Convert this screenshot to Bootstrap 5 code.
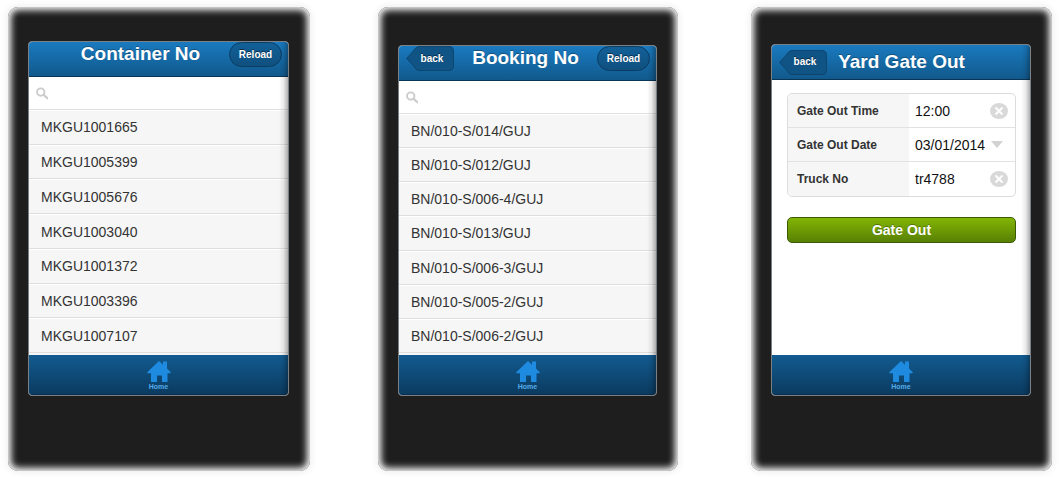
<!DOCTYPE html>
<html lang="en">
<head>
<meta charset="utf-8">
<meta name="viewport" content="width=device-width, initial-scale=1">
<title>Yard Gate Out</title>
<link href="https://cdn.jsdelivr.net/npm/bootstrap@5.3.0/dist/css/bootstrap.min.css" rel="stylesheet">
<style>
body { font-family: "Liberation Sans", Arial, sans-serif; background: #fff; color: #333; }
.showcase { display: grid; grid-template-columns: 370fr 373fr 301fr; padding: 7px 7px 6px 8px; }
.phone { background: #1e1e1e; border-radius: 10px; padding: 34px 21px 75px 20px;
  box-shadow: inset 0 0 7px 3px #fff, 0 0 7px 1px rgba(0,0,0,.08); }
.phone-containers { margin-right: 68px; }
.phone-bookings { margin-right: 73px; padding-top: 38px; }
.phone-gate { padding-top: 37px; }
.screen { border: 1px solid #7b8084; border-radius: 4px; background: #fff; overflow: hidden; }
.screen::after { content: ""; position: absolute; top: 0; right: 0; bottom: 0; width: 9px; pointer-events: none;
  background: linear-gradient(to right, rgba(0,0,0,0), rgba(0,0,0,.08) 50%, rgba(0,0,0,.3)); }
.titlebar { position: relative; z-index: 0; height: 35px; padding: 0 6px 0 7px; background: linear-gradient(#1a7abf, #11598c); border-bottom: 1px solid #0b3554; }
.titlebar h1 { font-size: 19px; line-height: 24px; font-weight: 700; color: #fff; text-shadow: 0 -1px 0 rgba(0,0,0,.3); }
.barbtn { height: 25px; font-size: 10px; line-height: 22px; font-weight: 700; color: #fff; padding: 0;
  text-shadow: 0 -1px 0 rgba(0,0,0,.5); background: linear-gradient(#126098, #0f507f); border: 1px solid #0b3d62; }
.reload { width: 53px; border-radius: 13px; }
.backbtn { position: relative; width: 48px; border: 0; background: none; padding-left: 4px; }
.backbtn svg { position: absolute; left: 0; top: 0; z-index: -1; }
.finder { height: 33px; padding: 0 7px; border-bottom: 1px solid #e1e1e1; }
.finder input { font-size: 14px; box-shadow: none !important; }
.records { background: #f6f6f6; font-size: 14px; line-height: 20px; padding-bottom: 2px; }
.records li { flex: 1 1 0; padding: 0 12px; border-top: 1px solid #fff; border-bottom: 1px solid #dedede; }
.tabbar { height: 40px; background: linear-gradient(#125b90, #0b3b60); border-bottom: 1px solid #082f50; padding-top: 6px; }
.tabbar a { color: #55aceb; font-size: 7px; line-height: 10px; font-weight: 700; }
.gateform { padding: 13px 14px 0 15px; }
.fields { border: 1px solid #dcdcdc; border-radius: 5px; overflow: hidden; margin-bottom: 20px; }
.field { height: 34px; border-bottom: 1px solid #e2e2e2; }
.field:last-child { border-bottom: 0; }
.field label { width: 121px; padding-left: 9px; background: #f6f6f6; font-size: 12px; font-weight: 700; line-height: 20px; }
.field input, .field select { min-width: 0; width: 50px; flex: 1 1 0; border: 0; padding: 0 0 0 6px; font-size: 14px; line-height: 20px; color: #111; background: none; appearance: none; outline: 0; }
.field svg { margin-right: 7px; }
.field .chevron { margin-right: 12px; }
.gatebtn { height: 26px; padding: 0; border: 1px solid #3c5a05; border-radius: 5px; background: linear-gradient(#82b505, #588003);
  color: #fff; font-size: 14px; line-height: 20px; font-weight: 700; text-shadow: 0 -1px 0 rgba(0,0,0,.3); }
</style>
</head>
<body>
<svg class="d-none" xmlns="http://www.w3.org/2000/svg">
  <symbol id="house" viewBox="0 0 24 21"><path fill="#1f8be0" d="M0 11.500L12 0l4 3.700V.5h4v7l4 4-1 .8h-2.500V21h-5.500v-6.500h-5V21H4v-8.700H1z"/></symbol>
  <symbol id="lens" viewBox="0 0 13 13"><circle cx="5" cy="5" r="3.900" fill="none" stroke="#ccc" stroke-width="2"/><path d="M8 8l4 3.500" stroke="#ccc" stroke-width="2.400" stroke-linecap="round"/></symbol>
  <symbol id="clear" viewBox="0 0 18 16"><ellipse cx="9" cy="8" rx="9" ry="8" fill="#d9d9d9"/><path d="M5.500 4.500l7 7m0-7l-7 7" stroke="#fff" stroke-width="2"/></symbol>
  <symbol id="backShape" viewBox="0 0 48 25"><path fill="#105486" stroke="#0b3d62" stroke-opacity=".7" d="M.7 12.500L8 4Q10 .5 13 .5h30q4.500 0 4.500 4.500v15q0 4.500-4.500 4.500H13q-3 0-5-4z"/></symbol>
</svg>
<main class="showcase min-vh-100">

  <section class="phone phone-containers d-flex">
    <div class="screen position-relative d-flex flex-column flex-fill">
      <header class="titlebar d-flex align-items-start">
        <h1 class="flex-fill text-center m-0 ps-3">Container No</h1>
        <button type="button" class="btn barbtn reload">Reload</button>
      </header>
      <div class="finder d-flex align-items-center">
        <svg width="13" height="13" aria-hidden="true"><use href="#lens"/></svg>
        <input type="search" class="form-control border-0 p-1 bg-transparent" aria-label="Search containers">
      </div>
      <ul class="records list-unstyled d-flex flex-column flex-fill m-0">
        <li class="d-flex align-items-center">MKGU1001665</li>
        <li class="d-flex align-items-center">MKGU1005399</li>
        <li class="d-flex align-items-center">MKGU1005676</li>
        <li class="d-flex align-items-center">MKGU1003040</li>
        <li class="d-flex align-items-center">MKGU1001372</li>
        <li class="d-flex align-items-center">MKGU1003396</li>
        <li class="d-flex align-items-center">MKGU1007107</li>
      </ul>
      <nav class="tabbar d-flex justify-content-center">
        <a href="#" class="d-flex flex-column align-items-center text-decoration-none"><svg width="24" height="21" aria-hidden="true"><use href="#house"/></svg>Home</a>
      </nav>
    </div>
  </section>

  <section class="phone phone-bookings d-flex">
    <div class="screen position-relative d-flex flex-column flex-fill">
      <header class="titlebar d-flex align-items-start">
        <button type="button" class="btn barbtn backbtn"><svg width="48" height="25" aria-hidden="true"><use href="#backShape"/></svg>back</button>
        <h1 class="flex-fill text-center m-0">Booking No</h1>
        <button type="button" class="btn barbtn reload">Reload</button>
      </header>
      <div class="finder d-flex align-items-center">
        <svg width="13" height="13" aria-hidden="true"><use href="#lens"/></svg>
        <input type="search" class="form-control border-0 p-1 bg-transparent" aria-label="Search bookings">
      </div>
      <ul class="records list-unstyled d-flex flex-column flex-fill m-0">
        <li class="d-flex align-items-center">BN/010-S/014/GUJ</li>
        <li class="d-flex align-items-center">BN/010-S/012/GUJ</li>
        <li class="d-flex align-items-center">BN/010-S/006-4/GUJ</li>
        <li class="d-flex align-items-center">BN/010-S/013/GUJ</li>
        <li class="d-flex align-items-center">BN/010-S/006-3/GUJ</li>
        <li class="d-flex align-items-center">BN/010-S/005-2/GUJ</li>
        <li class="d-flex align-items-center">BN/010-S/006-2/GUJ</li>
      </ul>
      <nav class="tabbar d-flex justify-content-center">
        <a href="#" class="d-flex flex-column align-items-center text-decoration-none"><svg width="24" height="21" aria-hidden="true"><use href="#house"/></svg>Home</a>
      </nav>
    </div>
  </section>

  <section class="phone phone-gate d-flex">
    <div class="screen position-relative d-flex flex-column flex-fill">
      <header class="titlebar d-flex align-items-center">
        <button type="button" class="btn barbtn backbtn"><svg width="48" height="25" aria-hidden="true"><use href="#backShape"/></svg>back</button>
        <h1 class="flex-fill text-center m-0 pe-5">Yard Gate Out</h1>
      </header>
      <form class="gateform flex-fill">
        <div class="fields">
          <div class="field d-flex align-items-center">
            <label for="gateTime" class="align-self-stretch d-flex align-items-center">Gate Out Time</label>
            <input type="text" id="gateTime" value="12:00">
            <svg width="18" height="16" aria-hidden="true"><use href="#clear"/></svg>
          </div>
          <div class="field d-flex align-items-center">
            <label for="gateDate" class="align-self-stretch d-flex align-items-center">Gate Out Date</label>
            <select id="gateDate"><option>03/01/2014</option></select>
            <svg class="chevron" width="12" height="7" viewBox="0 0 12 7" aria-hidden="true"><path d="M0 0h12L6 7z" fill="#d2d2d2"/></svg>
          </div>
          <div class="field d-flex align-items-center">
            <label for="truckNo" class="align-self-stretch d-flex align-items-center">Truck No</label>
            <input type="text" id="truckNo" value="tr4788">
            <svg width="18" height="16" aria-hidden="true"><use href="#clear"/></svg>
          </div>
        </div>
        <button type="button" class="btn gatebtn w-100">Gate Out</button>
      </form>
      <nav class="tabbar d-flex justify-content-center">
        <a href="#" class="d-flex flex-column align-items-center text-decoration-none"><svg width="24" height="21" aria-hidden="true"><use href="#house"/></svg>Home</a>
      </nav>
    </div>
  </section>

</main>
<script src="https://cdn.jsdelivr.net/npm/bootstrap@5.3.0/dist/js/bootstrap.bundle.min.js"></script>
</body>
</html>
